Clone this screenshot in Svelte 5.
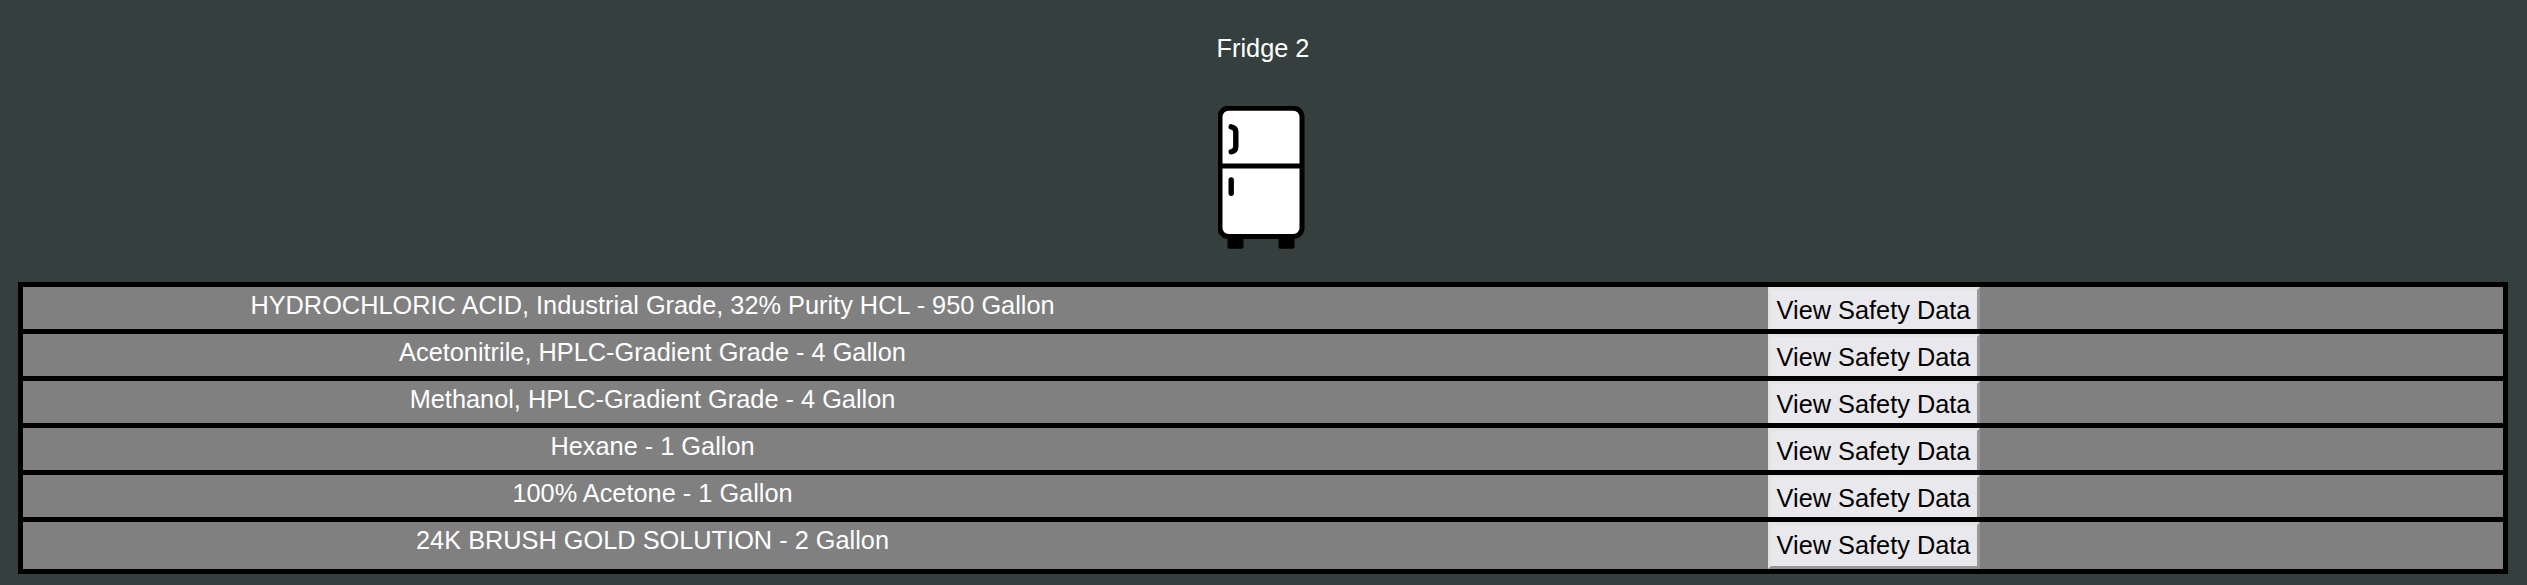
<script>
  const items = [
    'HYDROCHLORIC ACID, Industrial Grade, 32% Purity HCL - 950 Gallon',
    'Acetonitrile, HPLC-Gradient Grade - 4 Gallon',
    'Methanol, HPLC-Gradient Grade - 4 Gallon',
    'Hexane - 1 Gallon',
    '100% Acetone - 1 Gallon',
    '24K BRUSH GOLD SOLUTION - 2 Gallon'
  ];
</script>

<main>
  <h1>Fridge 2</h1>
  <svg class="fridge" width="88" height="144" viewBox="0 0 88 144" aria-hidden="true">
    <rect x="9.5" y="128" width="16" height="14.7" rx="2" />
    <rect x="60.5" y="128" width="16" height="14.7" rx="2" />
    <rect x="2" y="2.2" width="82" height="128.3" rx="8.5" fill="#fff" stroke="#000" stroke-width="5" />
    <path d="M3 60H84" stroke="#000" stroke-width="5" />
    <path d="M13.2 20.8Q17.8 21.5 17.8 26V40.5Q17.8 45 13.2 45.8M13.2 74V87.2" fill="none" stroke="#000" stroke-width="5.4" stroke-linecap="round" />
  </svg>
  <ul>
    {#each items as item}
      <li>
        <span>{item}</span>
        <div class="action"><button>View Safety Data</button></div>
      </li>
    {/each}
  </ul>
</main>

<style>
  :global(body) {
    background: #353f3d;
  }
  main {
    box-sizing: border-box;
    height: 585px;
    padding: 30px 19px 0 18px;
    display: flex;
    flex-direction: column;
    align-items: center;
    overflow: hidden;
    color: #fff;
    font: 25.33px/36px "Liberation Sans", Arial, sans-serif;
  }
  h1 {
    margin: 0;
    font: inherit;
  }
  .fridge {
    display: block;
    flex: none;
    margin: 40px 3px 32px 0;
  }
  ul {
    box-sizing: border-box;
    width: 100%;
    margin: 0;
    padding: 0;
    list-style: none;
    border: 5px solid #000;
    background: #808080;
  }
  li {
    display: grid;
    grid-template-columns: 1fr 1fr;
    height: 42px;
    overflow: hidden;
    border-bottom: 5px solid #000;
    text-align: center;
  }
  li:last-child {
    height: 47px;
    border-bottom: 0;
  }
  span {
    padding-left: 19px;
  }
  .action {
    padding-right: 18px;
  }
  button {
    display: block;
    box-sizing: border-box;
    width: 212px;
    height: 47px;
    margin: 0 auto;
    padding: 0 1px 2px 0;
    border: 3px solid;
    border-color: #e3e3e3 #979797 #979797 #e3e3e3;
    background: #e9e9ed;
    color: #000;
    font: inherit;
    white-space: nowrap;
  }
</style>
